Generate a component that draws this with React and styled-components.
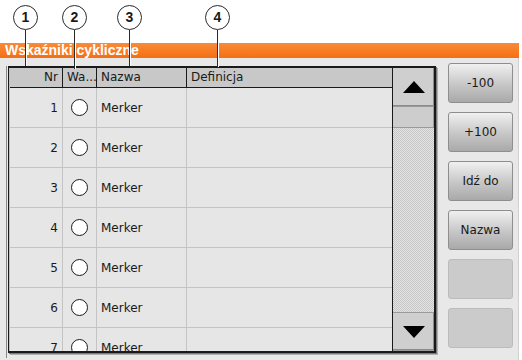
import styled, { createGlobalStyle } from "styled-components";

const GlobalStyle = createGlobalStyle`
  html, body {
    margin: 0;
    padding: 0;
    background: #ffffff;
    font-family: Tahoma, "DejaVu Sans", "Liberation Sans", sans-serif;
  }
`;

const Screen = styled.div`
  position: relative;
  width: 522px;
  height: 360px;
  overflow: hidden;
  display: flex;
  flex-direction: column;
`;

const TopSpace = styled.div`
  height: 43px;
  flex: none;
`;

const TitleBar = styled.div`
  height: 15px;
  width: 519px;
  flex: none;
  background: linear-gradient(#f98a3a, #f56f12);
  color: #ffffff;
  font-family: "Liberation Sans", Arial, sans-serif;
  font-weight: bold;
  font-size: 14px;
  line-height: 15px;
  padding-left: 5px;
  box-sizing: border-box;
`;

const Body = styled.div`
  flex: 1;
  width: 519px;
  background: #e8e8e8;
  display: flex;
  padding: 8px 0 0 6px;
  box-sizing: border-box;
  border-right: 1px solid #d0d0d0;
`;

const LeftRail = styled.div`
  width: 1px;
  height: 292px;
  background: #8a8a8a;
  margin-top: 0;
  flex: none;
`;

const TableFrame = styled.div`
  margin-left: 1px;
  width: 428px;
  height: 287px;
  border: 2px solid #1a1a1a;
  border-left-width: 1px;
  box-sizing: border-box;
  display: flex;
  background: #e6e6e6;
  box-shadow: 1px 1px 0 #7a7a7a, 2px 2px 0 #b0b0b0;
`;

const Grid = styled.div`
  flex: 1;
  display: flex;
  flex-direction: column;
  overflow: hidden;
  border-left: 1px solid #c0c0c0;
`;

const cols = "53px 34px 90px 1fr";

const HeaderRow = styled.div`
  display: grid;
  grid-template-columns: ${cols};
  height: 20px;
  flex: none;
  background: #c8c8c8;
  border-bottom: 1px solid #1a1a1a;
  box-sizing: border-box;
`;

const HeaderCell = styled.div`
  font-size: 12px;
  line-height: 19px;
  color: #1a1a1a;
  padding: 0 4px;
  text-align: ${(p) => (p.$right ? "right" : "left")};
  border-right: 1px solid #1a1a1a;
  white-space: nowrap;
  overflow: hidden;
  &:last-child {
    border-right: none;
  }
`;

const Row = styled.div`
  display: grid;
  grid-template-columns: ${cols};
  height: 40px;
  flex: none;
  border-bottom: 1px solid #c4c4c4;
  box-sizing: border-box;
`;

const Cell = styled.div`
  font-size: 12px;
  color: #1a1a1a;
  display: flex;
  align-items: center;
  justify-content: ${(p) => p.$align || "flex-start"};
  padding: 0 4px;
  border-right: 1px solid #c4c4c4;
  &:last-child {
    border-right: none;
  }
`;

const Radio = styled.span`
  width: 15px;
  height: 15px;
  border-radius: 50%;
  border: 1px solid #1a1a1a;
  background: #ffffff;
`;

const ScrollBar = styled.div`
  width: 41px;
  flex: none;
  display: flex;
  flex-direction: column;
  border-left: 1px solid #1a1a1a;
`;

const ScrollButton = styled.div`
  height: 39px;
  flex: none;
  background: #cfcfcf;
  border-bottom: 1px solid #9a9a9a;
  border-top: ${(p) => (p.$bottom ? "1px solid #9a9a9a" : "none")};
  display: flex;
  align-items: center;
  justify-content: center;
  box-shadow: inset -1px -1px 0 #8c8c8c;
  box-sizing: border-box;
`;

const Thumb = styled.div`
  height: 21px;
  flex: none;
  background: #cdcdcd;
  border-bottom: 1px solid #9a9a9a;
  box-shadow: inset -1px 0 0 #9a9a9a;
  box-sizing: border-box;
`;

const Track = styled.div`
  flex: 1;
  background: repeating-conic-gradient(#c6c6c6 0 25%, #e4e4e4 0 50%) 0 0 / 2px
    2px;
`;

const Side = styled.div`
  margin-left: 12px;
  display: flex;
  flex-direction: column;
  gap: 9px;
  margin-top: -3px;
`;

const SideButton = styled.div`
  width: 65px;
  height: 40px;
  box-sizing: border-box;
  border: 1px solid #8e8e8e;
  border-radius: 3px;
  background: ${(p) =>
    p.$empty ? "#cbcbcb" : "linear-gradient(#f0f0f0, #c6c6c6 55%, #a9a9a9)"};
  border-color: ${(p) => (p.$empty ? "#bcbcbc" : "#8e8e8e")};
  font-size: 12px;
  color: #1a1a1a;
  display: flex;
  align-items: center;
  justify-content: center;
`;

const Callout = styled.div`
  position: absolute;
  left: ${(p) => p.$x - 12}px;
  top: 5px;
  width: 25px;
  display: flex;
  flex-direction: column;
  align-items: center;
`;

const CalloutCircle = styled.div`
  width: 23px;
  height: 23px;
  border: 1px solid #2a2a2a;
  border-radius: 50%;
  background: #ffffff;
  font-family: "Liberation Sans", Arial, sans-serif;
  font-weight: bold;
  font-size: 14px;
  line-height: 23px;
  text-align: center;
  color: #1a1a1a;
`;

const CalloutLine = styled.div`
  width: 1px;
  height: ${(p) => p.$len}px;
  background: #2a2a2a;
  box-shadow: 1px 0 0 #ffffff;
`;

const callouts = [
  { n: 1, x: 25, len: 36 },
  { n: 2, x: 74, len: 39 },
  { n: 3, x: 129, len: 36 },
  { n: 4, x: 217, len: 37 },
];

const rows = [1, 2, 3, 4, 5, 6, 7];

const Arrow = ({ down }) => (
  <svg width="22" height="12" viewBox="0 0 22 12">
    <polygon
      points={down ? "0,0 22,0 11,12" : "0,12 22,12 11,0"}
      fill="#000000"
    />
  </svg>
);

export default function App() {
  return (
    <>
      <GlobalStyle />
      <Screen>
        <TopSpace />
        <TitleBar>Wskaźniki cykliczne</TitleBar>
        <Body>
          <LeftRail />
          <TableFrame>
            <Grid>
              <HeaderRow>
                <HeaderCell $right>Nr</HeaderCell>
                <HeaderCell>Wa...</HeaderCell>
                <HeaderCell>Nazwa</HeaderCell>
                <HeaderCell>Definicja</HeaderCell>
              </HeaderRow>
              {rows.map((n) => (
                <Row key={n}>
                  <Cell $align="flex-end">{n}</Cell>
                  <Cell $align="center">
                    <Radio />
                  </Cell>
                  <Cell>Merker</Cell>
                  <Cell />
                </Row>
              ))}
            </Grid>
            <ScrollBar>
              <ScrollButton>
                <Arrow />
              </ScrollButton>
              <Thumb />
              <Track />
              <ScrollButton $bottom>
                <Arrow down />
              </ScrollButton>
            </ScrollBar>
          </TableFrame>
          <Side>
            <SideButton>-100</SideButton>
            <SideButton>+100</SideButton>
            <SideButton>Idź do</SideButton>
            <SideButton>Nazwa</SideButton>
            <SideButton $empty />
            <SideButton $empty />
          </Side>
        </Body>
        {callouts.map((c) => (
          <Callout key={c.n} $x={c.x}>
            <CalloutCircle>{c.n}</CalloutCircle>
            <CalloutLine $len={c.len} />
          </Callout>
        ))}
      </Screen>
    </>
  );
}
